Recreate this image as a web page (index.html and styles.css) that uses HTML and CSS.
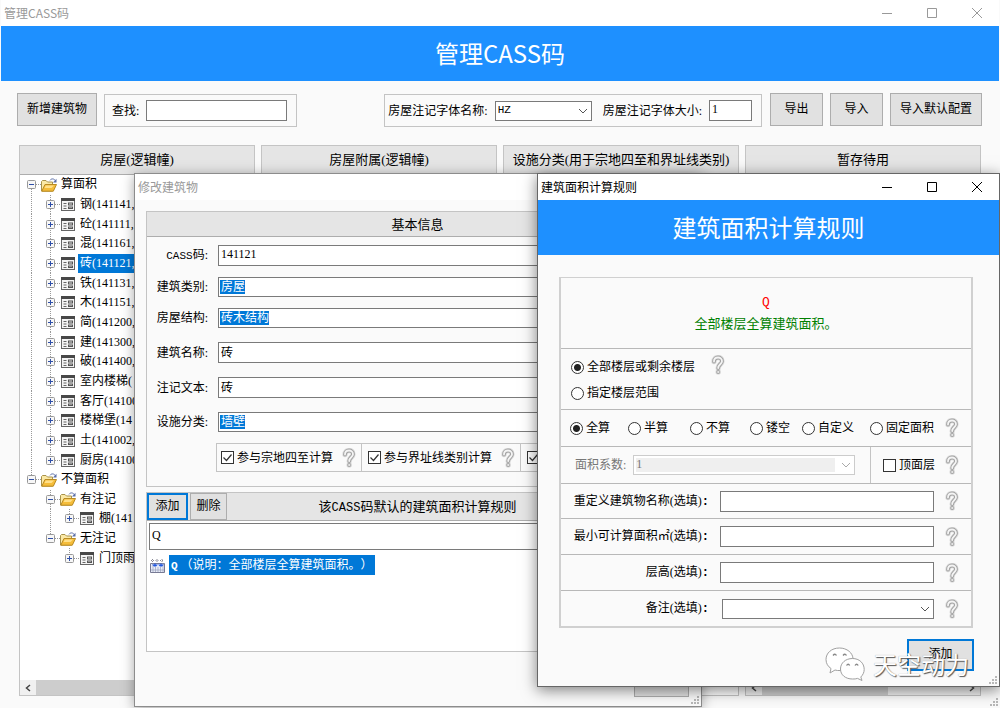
FILE: index.html
```html
<!DOCTYPE html>
<html lang="zh-CN">
<head>
<meta charset="utf-8">
<title>管理CASS码</title>
<link rel="stylesheet" href="styles.css">
</head>
<body>
<svg class="defs" aria-hidden="true">
  <symbol id="help" viewBox="0 0 14 20">
    <g fill="none" stroke-linecap="round" stroke-linejoin="round">
      <path d="M3 6.500C3 1.200 11 1.200 11 6.200C11 9.200 7.200 9.400 7.200 13" stroke="#dedede" stroke-width="5.400"/>
      <circle cx="7.200" cy="17" r="1.100" stroke="#dedede" stroke-width="3.400"/>
      <path d="M3 6.500C3 1.200 11 1.200 11 6.200C11 9.200 7.200 9.400 7.200 13" stroke="#a2a2a2" stroke-width="3.800"/>
      <circle cx="7.200" cy="17" r="1" stroke="#a2a2a2" stroke-width="2"/>
      <path d="M3 6.500C3 1.200 11 1.200 11 6.200C11 9.200 7.200 9.400 7.200 13" stroke="#f4f4f4" stroke-width="1.800"/>
      <circle cx="7.200" cy="17" r=".7" fill="#f4f4f4" stroke="#f4f4f4" stroke-width=".6"/>
    </g>
  </symbol>
  <symbol id="plus" viewBox="0 0 9 9">
    <rect x=".5" y=".5" width="8" height="8" rx="1" fill="#f7f7f7" stroke="#989898"/>
    <path d="M2 4.500h5M4.500 2v5" stroke="#2f4fa8"/>
  </symbol>
  <symbol id="minus" viewBox="0 0 9 9">
    <rect x=".5" y=".5" width="8" height="8" rx="1" fill="#f7f7f7" stroke="#989898"/>
    <path d="M2 4.500h5" stroke="#2f4fa8"/>
  </symbol>
  <symbol id="folder" viewBox="0 0 16 14">
    <path d="M.5 13V3.500L1.500 2.500H5L6.500 4H11.500V13z" fill="#fbe9a6" stroke="#a8924a"/>
    <path d="M.8 13.200L4 6.500H15.500L12.300 13.200z" fill="#f5bd3a" stroke="#b98a22"/>
    <path d="M4.800 7.500H13L10.500 10H3.500z" fill="#ffe08a"/>
    <path d="M9 2.300C10.500.3 13 .5 14.300 2.600" fill="none" stroke="#5b6fa8"/>
    <path d="M15.500.8V4.500H12z" fill="#5b6fa8"/>
  </symbol>
  <symbol id="form" viewBox="0 0 14 13">
    <rect x=".5" y=".5" width="13" height="12" fill="#f4f4f4" stroke="#666"/>
    <rect width="14" height="3" fill="#484848"/>
    <path d="M2.500 5.500h3M2.500 8h3M2.500 10.500h3" stroke="#666"/>
    <rect x="7.500" y="5" width="4" height="2" fill="#ddd" stroke="#555"/>
    <rect x="7.500" y="9" width="4" height="1.500" fill="#ddd" stroke="#555"/>
  </symbol>
  <symbol id="grip" viewBox="0 0 8 8">
    <path d="M6 0h2v2H6zM3 3h2v2H3zM6 3h2v2H6zM0 6h2v2H0zM3 6h2v2H3zM6 6h2v2H6z" fill="#b8b8b8"/>
  </symbol>
  <symbol id="controls" viewBox="0 0 100 10">
    <path d="M0 5.500h10M45.500.5h9v9h-9zM90 0l10 10M100 0L90 10" fill="none" stroke="currentColor"/>
  </symbol>
</svg>

<main class="app">
  <header class="titlebar inactive">
    <span>管理CASS码</span>
    <svg class="controls"><use href="#controls"/></svg>
  </header>
  <h1 class="banner">管理CASS码</h1>

  <div class="toolbar">
    <button class="btn">新增建筑物</button>
    <div class="group search">
      <label for="find">查找:</label>
      <input id="find" class="field" type="text">
    </div>
    <div class="group fonts">
      <label for="fname">房屋注记字体名称:</label>
      <select id="fname" class="combo latin"><option>HZ</option></select>
      <label for="fsize" class="second">房屋注记字体大小:</label>
      <input id="fsize" class="field" type="text" value="1">
    </div>
    <button class="btn">导出</button>
    <button class="btn">导入</button>
    <button class="btn">导入默认配置</button>
  </div>

  <div class="columns">
    <section class="column">
      <h2 class="bar">房屋(逻辑幢)</h2>
      <ul class="tree">
        <li><i class="node first"><svg><use href="#minus"/></svg></i><svg class="ico"><use href="#folder"/></svg><span>算面积</span></li>
        <li><i class="guide"></i><i class="node"><svg><use href="#plus"/></svg></i><svg class="ico leaf"><use href="#form"/></svg><span>钢(141141,</span></li>
        <li><i class="guide"></i><i class="node"><svg><use href="#plus"/></svg></i><svg class="ico leaf"><use href="#form"/></svg><span>砼(141111,</span></li>
        <li><i class="guide"></i><i class="node"><svg><use href="#plus"/></svg></i><svg class="ico leaf"><use href="#form"/></svg><span>混(141161,</span></li>
        <li><i class="guide"></i><i class="node"><svg><use href="#plus"/></svg></i><svg class="ico leaf"><use href="#form"/></svg><span class="selected">砖(141121,</span></li>
        <li><i class="guide"></i><i class="node"><svg><use href="#plus"/></svg></i><svg class="ico leaf"><use href="#form"/></svg><span>铁(141131,</span></li>
        <li><i class="guide"></i><i class="node"><svg><use href="#plus"/></svg></i><svg class="ico leaf"><use href="#form"/></svg><span>木(141151,</span></li>
        <li><i class="guide"></i><i class="node"><svg><use href="#plus"/></svg></i><svg class="ico leaf"><use href="#form"/></svg><span>简(141200,</span></li>
        <li><i class="guide"></i><i class="node"><svg><use href="#plus"/></svg></i><svg class="ico leaf"><use href="#form"/></svg><span>建(141300,</span></li>
        <li><i class="guide"></i><i class="node"><svg><use href="#plus"/></svg></i><svg class="ico leaf"><use href="#form"/></svg><span>破(141400,</span></li>
        <li><i class="guide"></i><i class="node"><svg><use href="#plus"/></svg></i><svg class="ico leaf"><use href="#form"/></svg><span>室内楼梯(</span></li>
        <li><i class="guide"></i><i class="node"><svg><use href="#plus"/></svg></i><svg class="ico leaf"><use href="#form"/></svg><span>客厅(14100</span></li>
        <li><i class="guide"></i><i class="node"><svg><use href="#plus"/></svg></i><svg class="ico leaf"><use href="#form"/></svg><span>楼梯堡(14</span></li>
        <li><i class="guide"></i><i class="node"><svg><use href="#plus"/></svg></i><svg class="ico leaf"><use href="#form"/></svg><span>土(141002,</span></li>
        <li><i class="guide"></i><i class="node last"><svg><use href="#plus"/></svg></i><svg class="ico leaf"><use href="#form"/></svg><span>厨房(14100</span></li>
        <li><i class="node last"><svg><use href="#minus"/></svg></i><svg class="ico"><use href="#folder"/></svg><span>不算面积</span></li>
        <li><i class="gap"></i><i class="node"><svg><use href="#minus"/></svg></i><svg class="ico"><use href="#folder"/></svg><span>有注记</span></li>
        <li><i class="gap"></i><i class="guide"></i><i class="node last"><svg><use href="#plus"/></svg></i><svg class="ico leaf"><use href="#form"/></svg><span>棚(141</span></li>
        <li><i class="gap"></i><i class="node last"><svg><use href="#minus"/></svg></i><svg class="ico"><use href="#folder"/></svg><span>无注记</span></li>
        <li><i class="gap"></i><i class="gap"></i><i class="node last"><svg><use href="#plus"/></svg></i><svg class="ico leaf"><use href="#form"/></svg><span>门顶雨</span></li>
      </ul>
      <div class="scroll"><svg viewBox="0 0 8 8"><path d="M6 1L2.500 4L6 7"/></svg><div class="thumb wide"></div><svg viewBox="0 0 8 8"><path d="M2 1L5.500 4L2 7"/></svg></div>
    </section>
    <section class="column"><h2 class="bar">房屋附属(逻辑幢)</h2></section>
    <section class="column"><h2 class="bar">设施分类(用于宗地四至和界址线类别)</h2></section>
    <section class="column">
      <h2 class="bar">暂存待用</h2>
      <div class="scroll"><svg viewBox="0 0 8 8"><path d="M6 1L2.500 4L6 7"/></svg><div class="track"><div class="thumb"></div></div><svg viewBox="0 0 8 8"><path d="M2 1L5.500 4L2 7"/></svg></div>
    </section>
  </div>
  <svg class="grip"><use href="#grip"/></svg>
</main>

<section class="window edit">
  <header class="titlebar inactive"><span>修改建筑物</span></header>
  <div class="panel info">
    <h2 class="bar">基本信息</h2>
    <div class="form">
      <label for="code"><span class="latin">CASS</span>码:</label><input id="code" class="field" type="text" value="141121">
      <label for="kind">建筑类别:</label><select id="kind" class="combo marked two"><option>房屋</option></select>
      <label for="struct">房屋结构:</label><select id="struct" class="combo marked four"><option>砖木结构</option></select>
      <label for="name" class="wide">建筑名称:</label><input id="name" class="field wide" type="text" value="砖">
      <label for="note" class="wide">注记文本:</label><input id="note" class="field wide" type="text" value="砖">
      <label for="cls" class="wide">设施分类:</label><select id="cls" class="combo marked two wide"><option>墙壁</option></select>
    </div>
    <div class="checks">
      <div><label><input type="checkbox" checked>参与宗地四至计算</label><svg class="help"><use href="#help"/></svg></div>
      <div><label><input type="checkbox" checked>参与界址线类别计算</label><svg class="help"><use href="#help"/></svg></div>
      <div><input type="checkbox" checked aria-label="参与计算"></div>
    </div>
  </div>
  <div class="panel rules">
    <div class="bar rulebar">
      <button class="btn focus">添加</button>
      <button class="btn">删除</button>
      <h2>该<span class="latin">CASS</span>码默认的建筑面积计算规则</h2>
    </div>
    <input class="field rule" type="text" value="Q" aria-label="规则">
    <div class="item">
      <svg viewBox="0 0 15 15"><path d="M.5 5.500h14v9H.5z" fill="#e8ecf8" stroke="#777a94"/><path d="M3 5v9M5.500 9v5M8 9v5M10.500 9v5M13 5v9M1 12h13" stroke="#9aa0ba" stroke-width=".7"/><path d="M1 2.500h3M5.500 2.500h3M10 2.500h4M2.500 1v4M7 1v4M12 1v4" stroke="#8a8a96" stroke-dasharray="1 1"/><path d="M5 5l.8 1.500H8L6 8.500H4L2 6.500h2.200zM11 5l.8 1.500H14L12 8.500h-2L8 6.500h2.200z" fill="#2358e0"/></svg>
      <span><b class="latin">Q</b>&nbsp;（说明：全部楼层全算建筑面积。）</span>
    </div>
  </div>
  <div class="footer"><button class="btn" aria-label="确定"></button></div>
  <svg class="grip"><use href="#grip"/></svg>
</section>

<section class="window calc">
  <header class="titlebar">
    <span>建筑面积计算规则</span>
    <svg class="controls"><use href="#controls"/></svg>
  </header>
  <h1 class="banner">建筑面积计算规则</h1>
  <div class="panel sheet">
    <div class="summary"><strong class="latin">Q</strong><p>全部楼层全算建筑面积。</p></div>
    <div class="range">
      <div><label><input type="radio" name="range" checked>全部楼层或剩余楼层</label><svg class="help"><use href="#help"/></svg></div>
      <div><label><input type="radio" name="range">指定楼层范围</label></div>
    </div>
    <div class="modes">
      <label><input type="radio" name="mode" checked>全算</label>
      <label><input type="radio" name="mode">半算</label>
      <label><input type="radio" name="mode">不算</label>
      <label><input type="radio" name="mode">镂空</label>
      <label><input type="radio" name="mode">自定义</label>
      <label><input type="radio" name="mode">固定面积</label>
      <svg class="help"><use href="#help"/></svg>
    </div>
    <div class="factor">
      <div class="ratio"><label for="ratio">面积系数:</label><select id="ratio" class="combo" disabled><option>1</option></select></div>
      <div class="top"><label><input type="checkbox">顶面层</label><svg class="help"><use href="#help"/></svg></div>
    </div>
    <div class="line"><label for="rename">重定义建筑物名称(选填)<b>:</b></label><input id="rename" class="field" type="text"><svg class="help"><use href="#help"/></svg></div>
    <div class="line"><label for="minarea">最小可计算面积㎡(选填)<b>:</b></label><input id="minarea" class="field" type="text"><svg class="help"><use href="#help"/></svg></div>
    <div class="line"><label for="height">层高(选填)<b>:</b></label><input id="height" class="field" type="text"><svg class="help"><use href="#help"/></svg></div>
    <div class="line"><label for="remark">备注(选填)<b>:</b></label><select id="remark" class="combo"><option></option></select><svg class="help"><use href="#help"/></svg></div>
  </div>
  <div class="footer"><button class="btn focus">添加</button></div>
  <svg class="grip"><use href="#grip"/></svg>
  <div class="watermark">
    <svg viewBox="0 0 40 34">
      <g fill="#fff" stroke="#a0a0a0">
        <path d="M14.500 1C6.500 1 1 6 1 12.500c0 4 2 7 5 9L5 26l5-3c6 2 18-1 18-11C28 6 22 1 14.500 1z"/>
        <path d="M27.500 11.500c-7 0-12 4.500-12 10.500s5 10 12 10c2 0 3.500 0 5-.6l4.500 2.100-1.200-3.500c2-2 3.400-4.500 3.400-7.500 0-6.500-5-11-11.700-11z"/>
      </g>
      <path d="M8 8.500q2-2.500 3.500 0M18 8.500q2-2.500 3.500 0M21.500 18.500q1.700-2.500 3.200 0M30 18.500q1.700-2.500 3.200 0" fill="none" stroke="#888" stroke-width="1.300"/>
    </svg>
    <span>天空动力</span>
  </div>
</section>
</body>
</html>
```

FILE: styles.css
```css
* { box-sizing: border-box; }

body {
  margin: 0;
  overflow: hidden;
  background: #fafafa;
  color: #000;
  font: 12px/16px "Liberation Serif", "Noto Sans CJK SC", serif;
  text-spacing-trim: space-all;
}

h1, h2, p, ul { margin: 0; padding: 0; font-weight: 400; }
input, select, button { margin: 0; font: inherit; color: inherit; }
svg { display: block; flex: none; }

.defs { position: absolute; width: 0; height: 0; }
.latin { font-family: "Liberation Mono", "Noto Sans CJK SC", monospace; font-size: 11px; }

/* Window chrome */
.app {
  display: flex;
  flex-direction: column;
  height: 100vh;
  padding: 0 1px;
}

.titlebar {
  display: flex;
  flex: none;
  align-items: center;
  justify-content: space-between;
  height: 26px;
  padding: 0 17px 0 3px;
  background: #fff;
  font-family: "Noto Sans CJK SC", sans-serif;
}
.titlebar.inactive { color: #999; }
.controls { width: 100px; height: 10px; }

.banner {
  flex: none;
  height: 55px;
  background: #1e90ff;
  color: #fff;
  font: 400 24px/54px "Noto Sans CJK SC", sans-serif;
  text-align: center;
}

.grip {
  position: absolute;
  right: 2px;
  bottom: 2px;
  width: 8px;
  height: 8px;
}

/* Shared controls */
.btn {
  flex: none;
  padding: 0 8px 2px;
  border: 1px solid #adadad;
  background: #e1e1e1;
  white-space: nowrap;
}
.btn.focus { border: 2px solid #0078d7; }

.field, .combo {
  min-width: 0;
  height: 21px;
  padding: 0 2px 2px;
  border: 1px solid #7a7a7a;
  border-radius: 0;
  background: #fff;
  outline: 0;
}

.combo {
  height: 20px;
  appearance: none;
  background: #fff url("data:image/svg+xml,%3Csvg xmlns='http://www.w3.org/2000/svg' width='10' height='6'%3E%3Cpath d='M1 1l4 4 4-4' fill='none' stroke='%23555'/%3E%3C/svg%3E") no-repeat right 3px center;
}
.combo.marked {
  padding-bottom: 0;
  background: linear-gradient(#0078d7, #0078d7) no-repeat 1px 2px #fff;
  color: #fff;
}
.combo.marked.two { background-size: 25px 14px; }
.combo.marked.four { background-size: 49px 14px; }

.help { width: 14px; height: 20px; }

input[type="radio"], input[type="checkbox"] {
  flex: none;
  width: 13px;
  height: 13px;
  border: 1px solid #333;
  background: #fff;
  appearance: none;
}
input[type="radio"] { border-radius: 50%; }
input[type="radio"]:checked {
  background: radial-gradient(circle, #222 0 3px, #fff 4px);
}
input[type="checkbox"]:checked {
  background: #fff url("data:image/svg+xml,%3Csvg xmlns='http://www.w3.org/2000/svg' width='11' height='11'%3E%3Cpath d='M1.500 5.500l3 3 5-6' fill='none' stroke='%23333' stroke-width='1.200'/%3E%3C/svg%3E") center;
}
label { white-space: nowrap; }
label:has(input) { display: flex; align-items: center; gap: 3px; }

.bar {
  background: #e5e5e5;
  border-bottom: 1px solid #adadad;
  font-size: 13px;
  text-align: center;
  white-space: nowrap;
}

/* Main toolbar */
.toolbar {
  display: flex;
  flex: none;
  gap: 7px;
  padding: 12px 17px 18px 16px;
}
.toolbar .btn { width: 80px; height: 33px; padding: 0 0 2px; }
.group {
  display: flex;
  align-items: center;
  height: 33px;
  margin-top: 1px;
  border: 1px solid #c4c4c4;
}
.search { gap: 7px; width: 193px; padding: 0 9px 0 7px; }
.search .field { flex: 1; }
.fonts { gap: 7px; margin: 1px 1px 0 auto; padding: 0 9px 0 3px; }
.fonts .combo { width: 97px; }
.fonts .field { width: 43px; }
.fonts .second { margin-left: 4px; }
.toolbar > .btn:nth-of-type(n+2) { width: 53px; }
.toolbar > .btn:last-child { width: 92px; }

.columns {
  display: grid;
  flex: 1;
  grid-template-columns: repeat(4, 1fr);
  gap: 6px;
  min-height: 0;
  padding: 0 18px 12px;
}
.column {
  display: flex;
  flex-direction: column;
  border: 1px solid #c4c4c4;
  background: #fff;
  overflow: hidden;
}
.column .bar { height: 29px; line-height: 28px; }

/* Tree */
.tree {
  display: flex;
  flex-direction: column;
  height: 393px;
  padding-left: 2px;
  list-style: none;
}
.tree li { display: flex; flex: 1; align-items: center; white-space: nowrap; }
.tree i { flex: none; align-self: stretch; width: 19px; }
.guide, .node {
  background: repeating-linear-gradient(#999 0 1px, transparent 1px 2px) no-repeat 9px 0 / 1px 100%;
}
.node { display: flex; align-items: center; padding-left: 5px; }
.node.last { background-size: 1px 50%; }
.node.first { background-position: 9px 100%; background-size: 1px 50%; }
.node svg { width: 9px; height: 9px; }
.node::after { content: ""; flex: 1; border-top: 1px dotted #999; }
.ico { width: 16px; height: 14px; }
.ico.leaf { width: 14px; height: 13px; margin: 0 1px; }
.tree span { margin-left: 2px; padding: 1px 2px; line-height: 17px; }
.selected { background: #0078d7; color: #fff; }

.scroll {
  display: flex;
  align-items: center;
  gap: 4px;
  height: 15px;
  margin-top: auto;
  padding: 0 4px;
  background: #f0f0f0;
}
.scroll svg { width: 8px; height: 8px; }
.scroll path { fill: none; stroke: #444; stroke-width: 1.5; }
.thumb { width: 126px; height: 15px; background: #cdcdcd; }
.thumb.wide { width: 180px; }
.track { flex: 1; }

/* Dialogs */
.window {
  position: absolute;
  display: flex;
  flex-direction: column;
  border: 1px solid #8c8c8c;
  background: #fafafa;
}
.panel { border: 1px solid #c4c4c4; }

.edit {
  top: 173px;
  left: 134px;
  width: 568px;
  height: 534px;
  padding-bottom: 9px;
  box-shadow: 0 2px 12px rgb(0 0 0 / 35%);
}
.edit .panel { margin: 0 12px 0 11px; }
.edit .info { margin-top: 11px; }
.info .bar { height: 25px; line-height: 25px; }
.form {
  display: grid;
  grid-template-columns: 61px 1fr;
  column-gap: 10px;
  row-gap: 11px;
  align-items: center;
  padding: 8px 9px 0 0;
}
.form label { text-align: right; }
.form .wide { margin-top: 3px; }
.checks {
  display: flex;
  height: 29px;
  margin: 11px 9px 14px 69px;
  border: 1px solid #c4c4c4;
}
.checks div { display: flex; align-items: center; gap: 9px; padding: 0 5px 0 4px; }
.checks div + div { border-left: 1px solid #c4c4c4; padding-left: 6px; }

.edit .rules { display: flex; flex-direction: column; height: 160px; margin-top: 5px; background: #fff; }
.rulebar { display: flex; flex: none; gap: 2px; height: 28px; }
.rulebar .btn { width: 37px; padding: 0 0 2px; font-size: 12px; }
.rulebar .btn.focus { width: 41px; }
.rulebar h2 { flex: 1; padding-right: 82px; font-size: 13px; line-height: 27px; }
.rulebar .latin { font-size: 12px; }
.rule { flex: none; height: 27px; margin: 2px 2px 5px; }
.item { display: flex; align-items: center; gap: 4px; height: 20px; padding-left: 3px; }
.item svg { width: 15px; height: 15px; }
.item span { height: 20px; padding: 2px; background: #0078d7; color: #fff; }

.footer { display: flex; justify-content: flex-end; }
.edit .footer { margin: auto 12px 0 0; }
.edit .footer .btn { width: 55px; height: 32px; }

.calc {
  top: 173px;
  left: 537px;
  right: 0;
  height: 514px;
  border-color: #666;
  box-shadow: 0 3px 14px rgb(0 0 0 / 50%);
}
.sheet { margin: 22px 26px 0 21px; border-width: 1px 2px 2px; border-color: #d0d0d0; }
.sheet > div + div { border-top: 1px solid #b8b8b8; }
.summary { display: grid; gap: 5px; height: 70px; align-content: center; text-align: center; font-size: 13px; }
.summary .latin { color: #f00; font-size: 13px; font-weight: 400; }
.summary p { color: #008000; }
.range { height: 61px; padding: 5px 10px; }
.range div { display: flex; align-items: center; gap: 16px; height: 26px; }
.range .help { margin-top: -4px; }
.modes {
  display: grid;
  grid-template-columns: 58px 62px 60px 52px 68px 1fr 14px;
  align-items: center;
  height: 37px;
  padding: 0 12px 0 9px;
}
.factor { display: flex; height: 37px; }
.ratio { display: flex; flex: 1; align-items: center; gap: 7px; padding: 0 15px 0 14px; color: #777; }
.ratio .combo {
  flex: 1;
  border-color: #ccc;
  background:
    url("data:image/svg+xml,%3Csvg xmlns='http://www.w3.org/2000/svg' width='10' height='6'%3E%3Cpath d='M1 1l4 4 4-4' fill='none' stroke='%23aaa'/%3E%3C/svg%3E") no-repeat right 3px center,
    linear-gradient(to left, #fff 19px, #efefef 19px);
  box-shadow: inset 0 0 0 2px #fff;
  opacity: 1;
}
.top { display: flex; align-items: center; justify-content: space-between; width: 101px; padding: 0 12px; border-left: 1px solid #c4c4c4; }
.line {
  display: grid;
  grid-template-columns: 1fr 214px 14px;
  gap: 11px;
  align-items: center;
  height: 36px;
  padding: 0 12px 0 8px;
}
.factor + .line { height: 35px; }
.line label { text-align: right; }
.line b { font-family: "Liberation Mono", monospace; }
.line .combo { margin-left: 2px; }
.calc .footer { margin: 11px 25px 0; }
.calc .footer .btn { width: 67px; height: 32px; }

.watermark {
  position: absolute;
  right: 30px;
  bottom: 5px;
  display: flex;
  align-items: center;
  gap: 8px;
  color: #fff;
  font: 24px/34px "Noto Sans CJK SC", sans-serif;
  text-shadow: 1px 1px 1px #555, 0 0 1px #999;
}
.watermark svg { width: 40px; height: 34px; }
```
